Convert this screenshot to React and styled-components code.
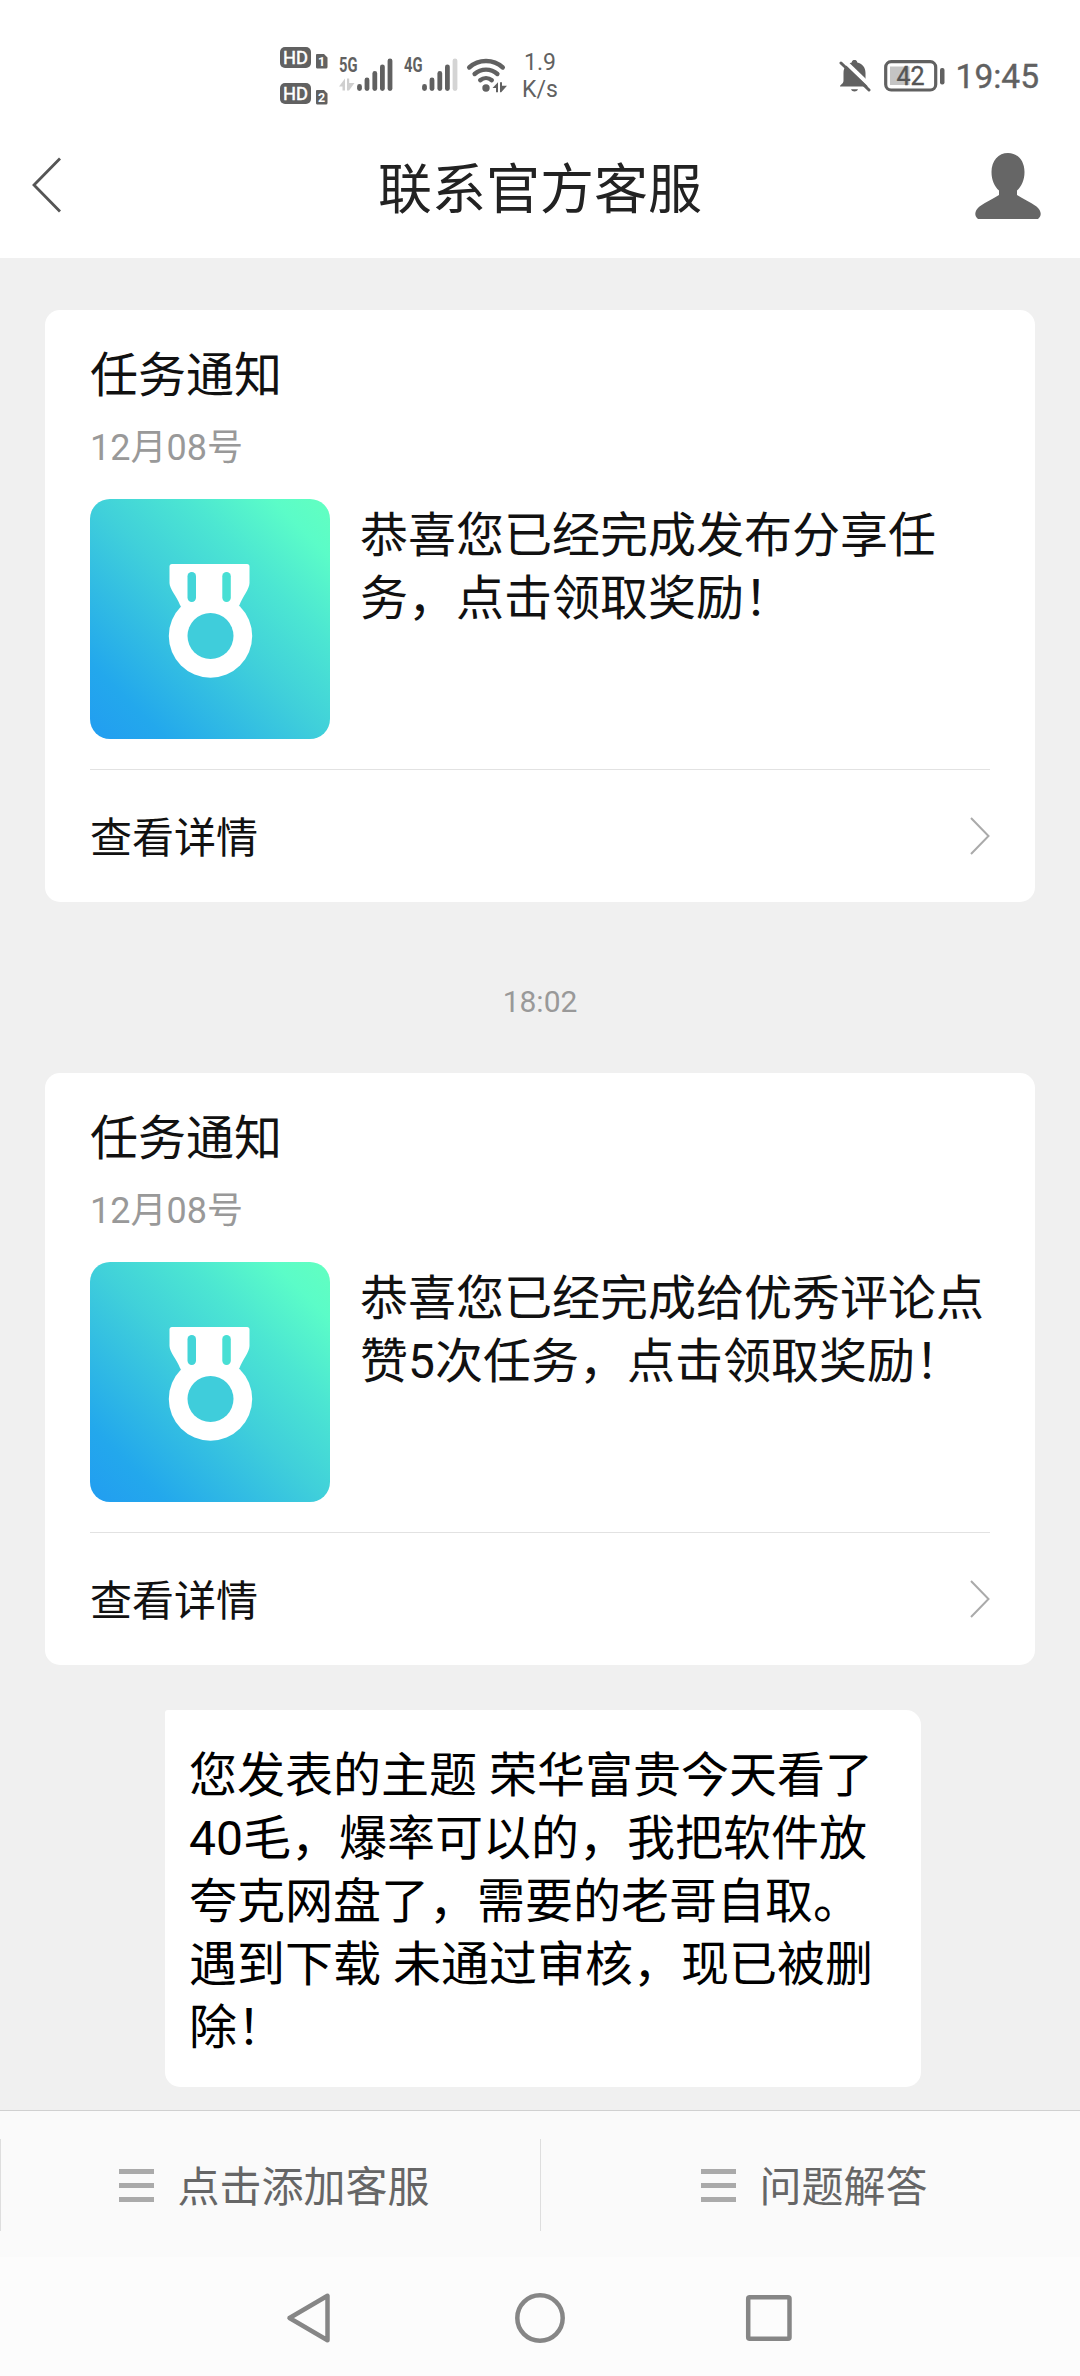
import styled, { createGlobalStyle } from "styled-components"

const notices = [
    { id: 1, title: "任务通知", date: "12月08号", lines: ["恭喜您已经完成发布分享任", "务，点击领取奖励！"] },
    { id: 2, title: "任务通知", date: "12月08号", lines: ["恭喜您已经完成给优秀评论点", "赞5次任务，点击领取奖励！"] },
]

const message = [
    "您发表的主题 荣华富贵今天看了",
    "40毛，爆率可以的，我把软件放",
    "夸克网盘了，需要的老哥自取。",
    "遇到下载 未通过审核，现已被删",
    "除！",
]

const HdIcon = ({ sim }) => (
    <svg width="48" height="22" viewBox="0 0 48 22">
        <rect x="0" y="0" width="31" height="21" rx="5" fill="#616161" />
        <text x="3" y="17" fontSize="18.500" fill="#fff" stroke="#fff" strokeWidth="0.5" textLength="25" lengthAdjust="spacingAndGlyphs">HD</text>
        <path d="M37 7h7l3.500 3.500V20a1.500 1.500 0 0 1-1.500 1.500h-9A1.500 1.500 0 0 1 36 20V8a1 1 0 0 1 1-1z" fill="#616161" />
        <text x="41.500" y="19" fontSize="12.500" fontWeight="700" fill="#fff" textAnchor="middle">{sim}</text>
    </svg>
)

const SignalIcon = ({ label, full }) => (
    <svg width="56" height="44" viewBox="0 -8 56 44">
        <text x="0" y="16" fontSize="20" fontWeight="700" fill="#616161" textLength="18.500" lengthAdjust="spacingAndGlyphs">{label}</text>
        {full && <path d="M0 30.500L6 22.500v12H3.500v-4zM8 22.500h2.200v4.500H15.500L10 34.500H8z" fill="#cfcfcf" />}
        <g stroke="#616161" strokeWidth="4.800" strokeLinecap="round">
            <path d="M20.500 32.500v-2" />
            <path d="M28 32.500v-8.500" />
            <path d="M35.800 32.500V17.500" />
            <path d="M43.400 32.500V10.800" />
            <path d="M51 32.500V4.800" stroke={full ? "#616161" : "#d4d4d4"} />
        </g>
    </svg>
)

const WifiIcon = () => (
    <svg width="44" height="36" viewBox="0 0 44 36">
        <g fill="none" stroke="#616161" strokeWidth="4.400" strokeLinecap="round">
            <path d="M3.200 10.500a25 25 0 0 1 33.600 0" />
            <path d="M8.600 17a17 17 0 0 1 22.800 0" />
            <path d="M14.200 23.200a9 9 0 0 1 11.600 0" />
        </g>
        <circle cx="20" cy="31" r="3.700" fill="#616161" />
        <path d="M26.500 31l5.500-5.800v10h-2V31zM34 25.200h2v3.600h5l-5.800 6.400H34z" fill="#616161" />
    </svg>
)

const BellOffIcon = () => (
    <svg width="33" height="34" viewBox="0 0 33 34">
        <path d="M1 27.500c0-2 3.500-2.500 3.500-6V14c0-6 3.800-9.500 8.200-10.500C13 1.500 14.200 1 15.500 1s2.500.5 2.800 2.500c4.700 1 8.200 4.500 8.200 10.500v7.500c0 3.500 2.500 4 2.500 6z" fill="#616161" />
        <path d="M12 30.300h7c-.6 1.600-2 2.200-3.500 2.200s-2.900-.6-3.500-2.200z" fill="#616161" />
        <path d="M4.500 1L33 28.500" stroke="#fff" strokeWidth="4" />
        <path d="M2 4l28 27" stroke="#616161" strokeWidth="3" strokeLinecap="round" />
    </svg>
)

const BatteryIcon = () => (
    <svg width="61" height="32" viewBox="0 0 61 32">
        <rect x="1.700" y="1.700" width="50" height="28.300" rx="5.500" fill="none" stroke="#616161" strokeWidth="3.200" />
        <rect x="6" y="6.500" width="19.500" height="18.500" fill="#c4c4c4" />
        <rect x="56" y="8" width="4.500" height="16.500" rx="2" fill="#616161" />
        <text x="26.500" y="24.500" fontSize="25" fill="#555" stroke="#555" strokeWidth="0.4" textAnchor="middle">42</text>
    </svg>
)

const BackIcon = () => (
    <svg width="30" height="56" viewBox="0 0 30 56">
        <path d="M29 1.500L3 28l26 26.500" fill="none" stroke="#555" strokeWidth="2.800" />
    </svg>
)

const PersonIcon = () => (
    <svg width="66" height="66" viewBox="0 0 66 66">
        <path d="M33 0c9.500 0 16.500 7.500 16.500 19 0 8-3 14.500-7.500 18.500v4.500c6 4 13 7 19.500 11.500 4.500 3.500 6 9 1.500 12.500H3c-4.500-3.500-3-9 1.500-12.500C11 49 18 46 24 42v-4.500c-4.500-4-7.500-10.500-7.500-18.500C16.500 7.500 23.500 0 33 0z" fill="#666" />
    </svg>
)

const MedalIcon = () => (
    <svg width="240" height="240" viewBox="0 0 240 240">
        <path d="M82 65h75a2.500 2.500 0 0 1 2.500 2.500V84c0 6-7 14-10 22l-5 8H95l-5-8c-3-8-10.500-16-10.500-22V67.500A2.500 2.500 0 0 1 82 65z" fill="#fff" />
        <circle cx="120.500" cy="137" r="41.700" fill="#fff" />
        <circle cx="120.500" cy="137" r="23" fill="#3fcddb" />
        <rect x="97.500" y="73" width="8.500" height="30" rx="4.200" fill="#43d5d8" />
        <rect x="132.300" y="73" width="8.500" height="30" rx="4.200" fill="#48dfd4" />
    </svg>
)

const ArrowIcon = () => (
    <svg width="20" height="38" viewBox="0 0 20 38">
        <path d="M1 1l17.500 18L1 37" fill="none" stroke="#aaa" strokeWidth="2" />
    </svg>
)

const Notice = ({ data }) => (
    <Card>
        <CardTitle>{data.title}</CardTitle>
        <CardDate>{data.date}</CardDate>
        <CardBody>
            <Tile><MedalIcon /></Tile>
            <CardText>
                {data.lines.map((line) => <Line key={line}>{line}</Line>)}
            </CardText>
        </CardBody>
        <CardLink>
            <span>查看详情</span>
            <ArrowIcon />
        </CardLink>
    </Card>
)

const App = () => {
    return (
        <Phone>
            <GlobalStyle />
            <StatusBar>
                <Network>
                    <HdStack>
                        <HdIcon sim="1" />
                        <HdIcon sim="2" />
                    </HdStack>
                    <SignalIcon label="5G" full />
                    <SignalIcon label="4G" />
                    <WifiIcon />
                    <Speed>
                        <span>1.9</span>
                        <span>K/s</span>
                    </Speed>
                </Network>
                <Device>
                    <BellOffIcon />
                    <BatteryIcon />
                    <Clock>19:45</Clock>
                </Device>
            </StatusBar>
            <Header>
                <BackIcon />
                <Title>联系官方客服</Title>
                <Profile><PersonIcon /></Profile>
            </Header>
            <Chat>
                <Notice data={notices[0]} />
                <Time>18:02</Time>
                <Notice data={notices[1]} />
                <Bubble>
                    {message.map((line) => <Line key={line}>{line}</Line>)}
                </Bubble>
            </Chat>
            <Menu>
                <MenuItem>
                    <Bars><i /><i /><i /></Bars>
                    <span>点击添加客服</span>
                </MenuItem>
                <MenuItem>
                    <Bars><i /><i /><i /></Bars>
                    <span>问题解答</span>
                </MenuItem>
            </Menu>
            <NavBar>
                <svg width="50" height="52" viewBox="0 0 50 52">
                    <path d="M41.500 3.800v44.400L3.500 26z" fill="none" stroke="#868686" strokeWidth="4.500" strokeLinejoin="round" />
                </svg>
                <svg width="50" height="52" viewBox="0 0 50 52">
                    <circle cx="25" cy="26" r="22.700" fill="none" stroke="#868686" strokeWidth="4.500" />
                </svg>
                <svg width="50" height="52" viewBox="0 0 50 52">
                    <rect x="4.200" y="5.200" width="41.300" height="41.600" rx="1.500" fill="none" stroke="#868686" strokeWidth="4.500" />
                </svg>
            </NavBar>
        </Phone>
    )
};

const GlobalStyle = createGlobalStyle`
    body{
        margin:0;
        background:#f0f0f0;
        font-family:Roboto, "Noto Sans CJK SC", sans-serif;
    }
    *{
        box-sizing:border-box;
    }
    svg{
        display:block;
        flex-shrink:0;
    }
`;

const Phone = styled.div`
    width:1080px;
    height:2376px;
    display:flex;
    flex-direction:column;
    overflow:hidden;
`;

const StatusBar = styled.div`
    height:112px;
    padding:0 41px 0 280px;
    display:flex;
    justify-content:space-between;
    background:#fff;
    color:#616161;
`;

const Network = styled.div`
    display:flex;
    padding-top:47px;

    & > svg{
        margin-top:1px;
    }
    & > svg:nth-of-type(1){
        margin-left:11px;
    }
    & > svg:nth-of-type(2){
        margin-left:9px;
    }
    & > svg:nth-of-type(3){
        margin:10px 0 0 6px;
    }
`;

const HdStack = styled.div`
    display:flex;
    flex-direction:column;
    gap:14px;
`;

const Speed = styled.div`
    display:flex;
    flex-direction:column;
    width:40px;
    margin:2px 0 0 10px;
    font-size:23px;
    line-height:27px;
    text-align:center;
`;

const Device = styled.div`
    height:32px;
    margin-top:60px;
    display:flex;
    align-items:center;

    & > svg:first-child{
        margin-right:12px;
    }
`;

const Clock = styled.span`
    margin-left:11px;
    font-size:33.5px;
    -webkit-text-stroke:0.4px #616161;
`;

const Header = styled.header`
    height:146px;
    padding:0 31px;
    display:grid;
    grid-template-columns:1fr auto 1fr;
    align-items:center;
    background:#fff;
`;

const Title = styled.h1`
    margin:0;
    font-size:54px;
    font-weight:400;
    color:#222;
`;

const Profile = styled.div`
    justify-self:end;
    margin:2px 8px 0 0;
`;

const Chat = styled.main`
    flex:1;
    padding:52px 45px 0;
    color:#111;
`;

const Card = styled.section`
    height:592px;
    padding:34px 45px 0;
    border-radius:15px;
    background:#fff;
`;

const CardTitle = styled.h2`
    margin:0;
    font-size:48px;
    font-weight:400;
    line-height:63px;
`;

const CardDate = styled.p`
    margin:16px 0 26px;
    font-size:36px;
    line-height:50px;
    color:#999;
`;

const CardBody = styled.div`
    display:flex;
    gap:30px;
    padding-bottom:30px;
    border-bottom:1px solid #e2e2e2;
`;

const Tile = styled.div`
    width:240px;
    height:240px;
    border-radius:20px;
    background:linear-gradient(45deg, #229ff0 3%, #23a8ec 16%, #40d0da 50%, #4ce6d2 70%, #5bfcc8 88%, #62ffc0);
`;

const CardText = styled.div`
    padding-top:5px;
    font-size:48px;
`;

const Line = styled.p`
    margin:0;
    line-height:63px;
    white-space:nowrap;
`;

const CardLink = styled.div`
    height:132px;
    display:flex;
    justify-content:space-between;
    align-items:center;
    font-size:42px;

    span{
        padding-bottom:4px;
    }
`;

const Time = styled.div`
    height:171px;
    padding-top:28px;
    display:flex;
    justify-content:center;
    align-items:center;
    font-size:30px;
    color:#999;
`;

const Bubble = styled.div`
    width:756px;
    margin:45px 0 0 120px;
    padding:34px 24px 28px;
    border-radius:3px 15px 15px 15px;
    background:#fff;
    font-size:48px;
    color:#000;
`;

const Menu = styled.nav`
    height:147px;
    padding:28px 0 26px;
    display:flex;
    border-top:1px solid #d0d0d0;
    background:#fafafa;
`;

const MenuItem = styled.div`
    flex:1;
    display:flex;
    justify-content:center;
    align-items:center;
    gap:23px;
    padding-left:8px;
    border-left:1px solid #dedede;
    font-size:42px;
    color:#666;

    span:last-child{
        padding-bottom:4px;
    }
`;

const Bars = styled.span`
    width:35px;
    display:flex;
    flex-direction:column;
    gap:9px;

    i{
        height:5px;
        background:#aaa;
    }
`;

const NavBar = styled.div`
    height:119px;
    padding:2px 0 0;
    display:flex;
    justify-content:center;
    align-items:center;
    gap:179px;
    background:#fcfcfc;
`;

export default App
